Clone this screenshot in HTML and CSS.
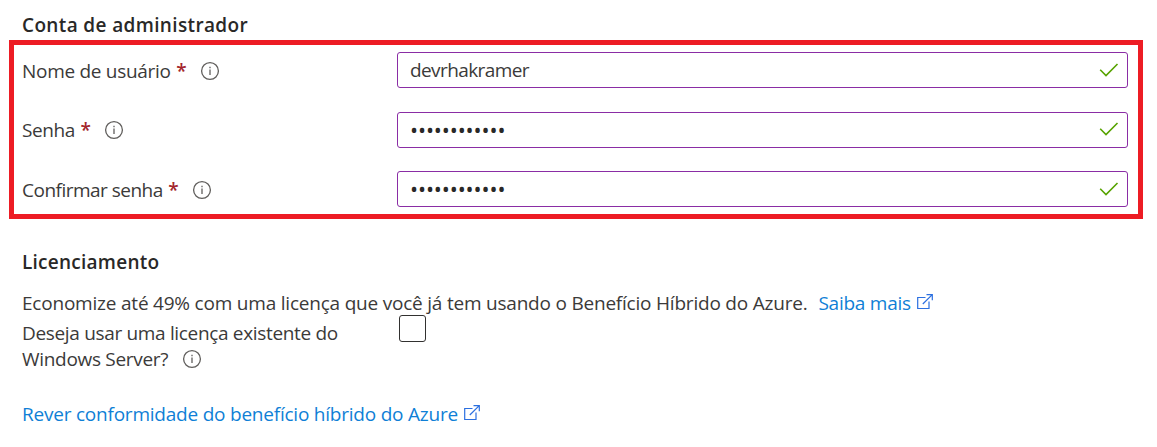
FILE: index.html
```
<!DOCTYPE html>
<html lang="pt-BR">
<head>
<meta charset="utf-8">
<title>Conta de administrador</title>
<link rel="stylesheet" href="styles.css">
</head>
<body>
<svg class="defs" width="0" height="0">
  <symbol id="info" viewBox="0 0 20 20"><circle cx="10" cy="10" r="8.4" fill="none" stroke="currentColor" stroke-width="1.3"/><path d="M10 8.6V14M10 5.8V7.2" fill="none" stroke="currentColor" stroke-width="1.3"/></symbol>
  <symbol id="check" viewBox="0 0 20 16"><path d="M1.2 7.8L7 13.5L18.5 2" fill="none" stroke="currentColor" stroke-width="1.6"/></symbol>
  <symbol id="external" viewBox="0 0 18 18"><path d="M9.5 4.5H1.7V15.5H13V8.5M6.8 11L16 1.8M10.5 1.6H16.3V7.2" fill="none" stroke="currentColor" stroke-width="1.2"/></symbol>
</svg>
<main class="page">
  <h2 class="heading heading-account">Conta de administrador</h2>
  <section class="highlight">
    <div class="row">
      <label class="label"><span class="t-user">Nome de usuário</span><span class="required">*</span><svg class="info"><use href="#info"/></svg></label>
      <div class="field"><span class="t-value">devrhakramer</span><svg class="check"><use href="#check"/></svg></div>
    </div>
    <div class="row">
      <label class="label"><span class="t-pass">Senha</span><span class="required">*</span><svg class="info"><use href="#info"/></svg></label>
      <div class="field"><span class="dots">••••••••••••</span><svg class="check check-raised"><use href="#check"/></svg></div>
    </div>
    <div class="row">
      <label class="label label-confirm"><span class="t-confirm">Confirmar senha</span><span class="required">*</span><svg class="info"><use href="#info"/></svg></label>
      <div class="field"><span class="dots">••••••••••••</span><svg class="check"><use href="#check"/></svg></div>
    </div>
  </section>
  <h2 class="heading heading-license">Licenciamento</h2>
  <p class="intro"><span class="t-intro">Economize até 49% com uma licença que você já tem usando o Benefício Híbrido do Azure.</span><a class="link more"><span class="t-more">Saiba mais</span><svg class="external"><use href="#external"/></svg></a></p>
  <div class="option">
    <div class="option-label">
      <span class="t-opt1">Deseja usar uma licença existente do</span>
      <span class="option-line"><span class="t-opt2">Windows Server?</span><svg class="info"><use href="#info"/></svg></span>
    </div>
    <span class="checkbox"></span>
  </div>
  <a class="link review"><span class="t-review">Rever conformidade do benefício híbrido do Azure</span><svg class="external"><use href="#external"/></svg></a>
</main>
</body>
</html>
```
FILE: styles.css
```
* { box-sizing: border-box; }
body {
  margin: 0;
  background: #fff;
  color: #3b3a39;
  font: 400 19px/26px "Open Sans", "Noto Sans", sans-serif;
}
.defs { display: block; height: 0; }
svg { flex: none; }
span { white-space: nowrap; }
.page { height: 447px; padding: 12px 14px 0 9px; overflow: hidden; }
.heading { margin: 0 0 0 13px; font-size: 19px; font-weight: 600; line-height: 26px; white-space: nowrap; color: #292827; }
.heading-account { margin-bottom: 2px; letter-spacing: 0.36px; }
.highlight {
  display: flex;
  flex-direction: column;
  gap: 23.5px;
  height: 179px;
  padding: 7px 10px 0 8px;
  border: 5px solid #ed1c24;
}
.row { display: grid; grid-template-columns: 375px 731px; height: 36px; align-items: center; }
.label { display: flex; align-items: center; padding-top: 1px; }
.label-confirm { padding-top: 2px; }
.t-user { letter-spacing: -0.29px; }
.t-pass { letter-spacing: -0.4px; }
.t-confirm { letter-spacing: -0.51px; }
.t-value { letter-spacing: -0.6px; }
.t-intro { letter-spacing: -0.21px; }
.t-more { letter-spacing: -0.25px; }
.t-opt1 { letter-spacing: -0.33px; }
.t-opt2 { letter-spacing: -0.3px; }
.t-review { letter-spacing: -0.22px; }
.required { margin-left: 5.5px; color: #a4262c; font-weight: 600; }
.info { width: 20px; height: 20px; margin-left: 13.3px; color: #605e5c; }
.field {
  display: flex;
  align-items: center;
  justify-content: space-between;
  height: 36px;
  padding: 0 8px 0 12px;
  border: 1px solid #8a2da5;
  border-radius: 3px;
}
.check { width: 20px; height: 16px; color: #57a300; }
.check-raised { margin-bottom: 2px; }
.dots { font-size: 21.5px; letter-spacing: -0.14px; color: #292827; }
.heading-license { margin-top: 30px; letter-spacing: 0.25px; }
.intro { display: flex; margin: 15px 0 0 13px; }
.link { display: flex; color: #0f7fd6; }
.more { margin-left: 11px; }
.external { width: 18px; height: 18px; margin: 3px 0 0 5.5px; color: #2b6fe0; }
.option { display: flex; margin: -1px 0 0 13px; }
.option-label { display: flex; flex-direction: column; width: 377px; padding-top: 5px; }
.option-line { display: flex; align-items: center; }
.checkbox { width: 27px; height: 27px; border: 1px solid #323130; border-radius: 3px; }
.review { margin: 29px 0 0 13px; }
```
